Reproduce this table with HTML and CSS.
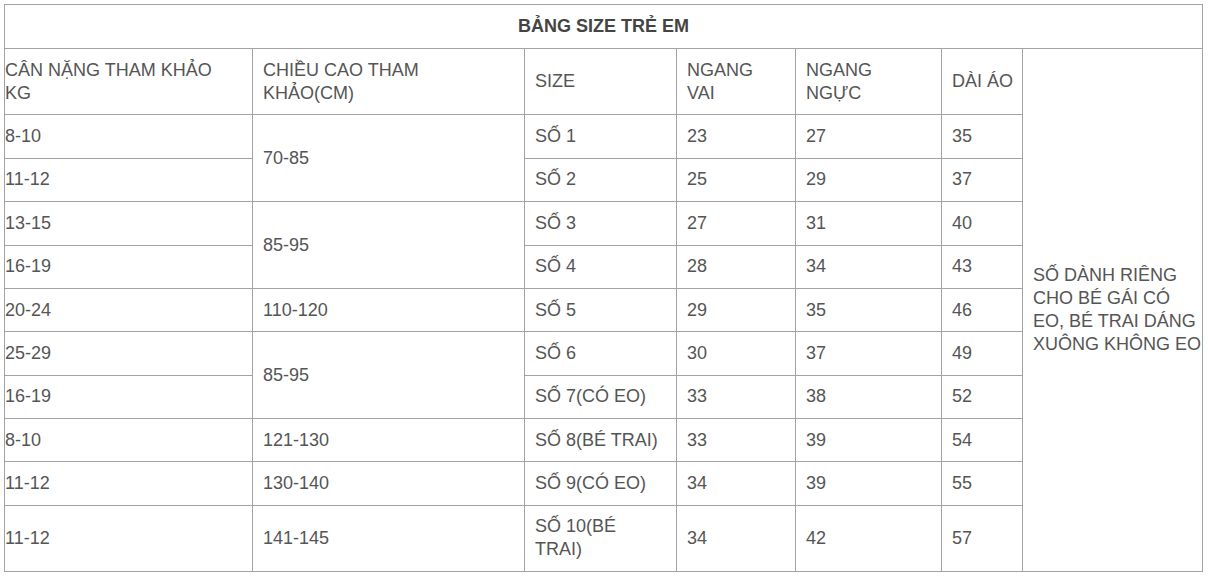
FILE: index.html
```html
<!DOCTYPE html>
<html lang="vi">
<head>
<meta charset="utf-8">
<link rel="stylesheet" href="styles.css">
</head>
<body>
<div class="wrap">
<table class="size-table">
<colgroup>
<col class="c1"><col class="c2"><col class="c3"><col class="c4"><col class="c5"><col class="c6"><col class="c7">
</colgroup>
<tr><td class="title" colspan="7">BẢNG SIZE TRẺ EM</td></tr>
<tr>
<td class="first">CÂN NẶNG THAM KHẢO KG</td>
<td>CHIỀU CAO THAM KHẢO(CM)</td>
<td>SIZE</td>
<td>NGANG VAI</td>
<td>NGANG NGỰC</td>
<td class="short">DÀI ÁO</td>
<td class="note" rowspan="12">SỐ DÀNH RIÊNG CHO BÉ GÁI CÓ EO, BÉ TRAI DÁNG XUÔNG KHÔNG EO</td>
</tr>
<tr><td class="first">8-10</td><td rowspan="2">70-85</td><td>SỐ 1</td><td>23</td><td>27</td><td>35</td></tr>
<tr><td class="first">11-12</td><td>SỐ 2</td><td>25</td><td>29</td><td>37</td></tr>
<tr><td class="first">13-15</td><td rowspan="2">85-95</td><td>SỐ 3</td><td>27</td><td>31</td><td>40</td></tr>
<tr><td class="first">16-19</td><td>SỐ 4</td><td>28</td><td>34</td><td>43</td></tr>
<tr><td class="first">20-24</td><td>110-120</td><td>SỐ 5</td><td>29</td><td>35</td><td>46</td></tr>
<tr><td class="first">25-29</td><td rowspan="2">85-95</td><td>SỐ 6</td><td>30</td><td>37</td><td>49</td></tr>
<tr><td class="first">16-19</td><td>SỐ 7(CÓ EO)</td><td>33</td><td>38</td><td>52</td></tr>
<tr><td class="first">8-10</td><td>121-130</td><td>SỐ 8(BÉ TRAI)</td><td>33</td><td>39</td><td>54</td></tr>
<tr><td class="first">11-12</td><td>130-140</td><td>SỐ 9(CÓ EO)</td><td>34</td><td>39</td><td>55</td></tr>
<tr><td class="first">11-12</td><td>141-145</td><td>SỐ 10(BÉ TRAI)</td><td>34</td><td>42</td><td>57</td></tr>
</table>
</div>
</body>
</html>
```
FILE: styles.css
```css
html, body {
  margin: 0;
  padding: 0;
  background: #fff;
}
.wrap {
  padding: 4px 0 0 4px;
}
.size-table {
  border-collapse: collapse;
  table-layout: fixed;
  width: 1199px;
  font-family: "Liberation Sans", Arial, sans-serif;
  font-size: 18px;
  line-height: 23px;
  color: #555;
}
.c1 { width: 248px; }
.c2 { width: 272px; }
.c3 { width: 152px; }
.c4 { width: 119px; }
.c5 { width: 146px; }
.c6 { width: 81px; }
.c7 { width: 180px; }
.size-table td {
  border: 1px solid #a3a3a3;
  padding: 9.7px 15px 9.7px 10px;
  vertical-align: middle;
  text-align: left;
}
.size-table td.first {
  padding-left: 0;
}
.size-table td.short {
  padding-right: 4px;
}
.size-table td.title {
  text-align: center;
  font-weight: bold;
  color: #444;
  padding: 10px;
  height: 23px;
}
.size-table td.note {
  padding-right: 0;
}
```
